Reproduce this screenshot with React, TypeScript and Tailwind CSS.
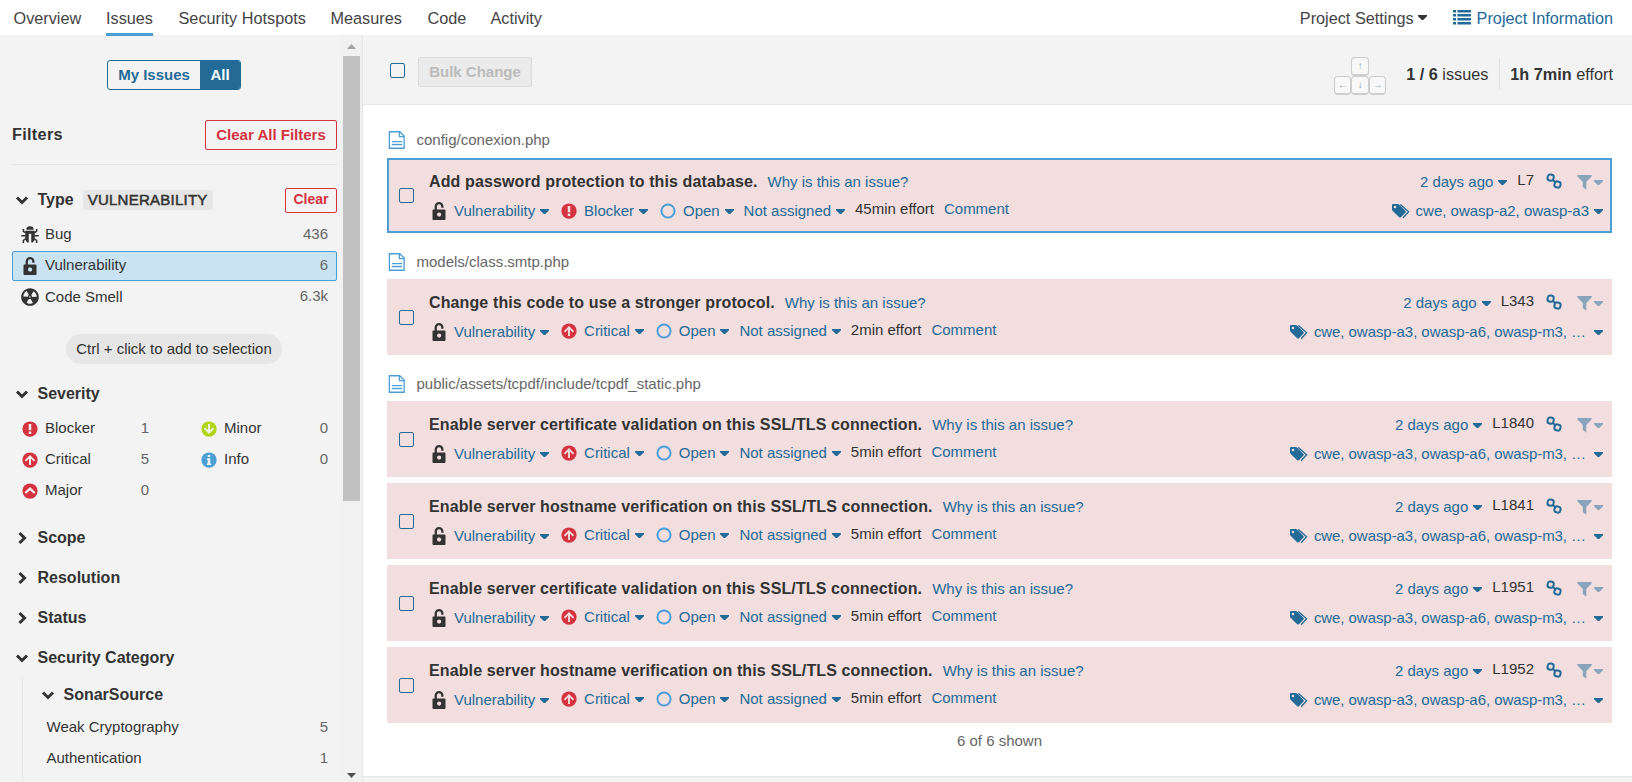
import React from "react";

function Svg({ children, className = "", size = 20 }: { children: React.ReactNode; className?: string; size?: number }) {
  return (
    <svg viewBox="0 0 16 16" width={size} height={size} fill="currentColor" className={`block shrink-0 ${className}`}>
      {children}
    </svg>
  );
}

const BugIcon = () => (
  <Svg className="text-[#333]">
    <path d="M5.100 3.400a2.900 2.500 0 0 1 5.800 0v.4H5.100z" />
    <path fillRule="evenodd" d="M4.200 4.500h7.600v7.200l-1.600 2.300H9V6.900H7V14H5.800l-1.600-2.300z" />
    <path
      d="M4.600 6.300L2.700 5V3.200M11.400 6.300L13.300 5V3.200M4.400 8.600H1M11.600 8.600H15M4.600 11l-1.900 1.400v2M11.400 11l1.900 1.400v2"
      fill="none"
      stroke="currentColor"
      strokeWidth="1.200"
    />
  </Svg>
);

const LockIcon = () => (
  <Svg className="text-[#333]">
    <path
      fillRule="evenodd"
      d="M3.600 6.700h8.800c.4 0 .8.300.8.800v6.800c0 .4-.3.800-.8.800H3.600c-.4 0-.8-.3-.8-.8V7.500c0-.4.300-.8.800-.8zM8.100 9.100a1.700 1.700 0 1 0 0 3.400 1.700 1.700 0 0 0 0-3.400z"
    />
    <path d="M5.400 7.200V4.400a2.650 2.650 0 0 1 5.300 0v1" fill="none" stroke="currentColor" strokeWidth="1.800" />
  </Svg>
);

const SmellIcon = () => (
  <Svg className="text-[#333]">
    <path
      transform="translate(8 8) scale(1.18) translate(-8 -8)"
      d="M8 2C4.700 2 2 4.700 2 8s2.700 6 6 6 6-2.700 6-6-2.700-6-6-6zm-.5 5.500h.9v.9h-.9v-.9zm-3.800.2c-.1 0-.2-.1-.2-.2 0-.4.100-1.200.6-2S5.300 4.200 5.600 4c.2 0 .3 0 .3.100l1.300 2.300c0 .1 0 .2-.1.200-.1.200-.2.300-.3.500-.1.200-.2.400-.2.500 0 .1-.1.200-.2.200l-2.700-.1zM9.900 12c-.3.200-1.100.5-2 .5-.9 0-1.700-.3-2-.5-.1 0-.1-.2-.1-.3l1.300-2.300c0-.1.100-.1.200-.1.200.1.300.1.500.1s.4 0 .5-.1c.1 0 .2 0 .2.100l1.300 2.300c.2.200.2.300.1.300zm2.500-4.100L9.700 8c-.1 0-.2-.1-.2-.2 0-.2-.1-.4-.2-.5 0-.1-.2-.3-.3-.4-.1 0-.1-.1-.1-.2l1.300-2.300c.1-.1.200-.1.300-.1.300.2 1 .7 1.500 1.500s.6 1.600.6 2c0 0-.1.100-.2.100z"
    />
  </Svg>
);

type Severity = "Blocker" | "Critical" | "Major" | "Minor" | "Info";

function SeverityIcon({ kind, hole = "#f3f3f3" }: { kind: Severity; hole?: string }) {
  const color = kind === "Minor" ? "#b0d513" : kind === "Info" ? "#4b9fd5" : "#d4333f";
  return (
    <Svg>
      <circle cx="8" cy="8" r="6.100" fill={color} />
      {kind === "Blocker" && <path fill={hole} d="M7 4h2v5H7zM7 10h2v2H7z" />}
      {kind === "Critical" && (
        <path d="M8 12V5M4.400 8.700L8 5.100l3.600 3.600" stroke={hole} strokeWidth="1.500" fill="none" />
      )}
      {kind === "Major" && <path d="M4.300 9.600L8 6.100l3.700 3.500" stroke={hole} strokeWidth="1.800" fill="none" />}
      {kind === "Minor" && (
        <path d="M8 4v7M4.400 7.300L8 10.900l3.600-3.600" stroke={hole} strokeWidth="1.500" fill="none" />
      )}
      {kind === "Info" && <path fill={hole} d="M7 4h2v1.600H7zM6.300 6.500H9v4.300h.700V12H6.300v-1.200H7V7.700h-.700z" />}
    </Svg>
  );
}

const FileIcon = () => (
  <Svg className="text-[#4b9fd5]">
    <path d="M1.900 1.400h8.300l3.500 3.500v9.700H1.900z" fill="none" stroke="currentColor" strokeWidth="1.050" />
    <path d="M9.900 1.400v3.800h3.800" fill="none" stroke="currentColor" strokeWidth="1" />
    <path d="M3.900 9.200h8.200M3.900 11.700h8.200" stroke="currentColor" strokeWidth=".9" />
    <path d="M3.900 10.400h8.200" stroke="currentColor" strokeWidth=".7" opacity=".45" />
  </Svg>
);

const Caret = ({ className = "text-[#236a97]" }: { className?: string }) => (
  <svg viewBox="0 0 9 5" width="9" height="5" fill="currentColor" className={`block shrink-0 ${className}`}>
    <path d="M0 0h9v1.200L5.200 5H3.800L0 1.200z" />
  </svg>
);

const Chevron = ({ open }: { open?: boolean }) => (
  <svg viewBox="0 0 20 20" width="20" height="20" fill="none" stroke="#333" strokeWidth="3" className="block shrink-0">
    {open ? <path d="M5 7.500l5 5 5-5" /> : <path d="M7.500 5l5 5-5 5" />}
  </svg>
);

const LinkIcon = () => (
  <Svg className="text-[#236a97]">
    <g fill="none" stroke="currentColor" strokeWidth="1.600">
      <rect x="2.900" y="2.900" width="4.800" height="4.800" rx="1.900" transform="rotate(12 5.300 5.300)" />
      <rect x="8.400" y="8.400" width="4.800" height="4.800" rx="1.900" transform="rotate(12 10.800 10.800)" />
      <path d="M6.600 6.600l3 3" />
    </g>
  </Svg>
);

const FunnelIcon = () => (
  <svg viewBox="0 0 15 15" width="15" height="15" fill="currentColor" className="block shrink-0 text-[#8aa5bb]">
    <path d="M.3 0h14.400v1.300L9.300 7v7.800L5.800 12V7L.3 1.300z" />
  </svg>
);

const TagsIcon = () => (
  <svg viewBox="0 0 18 15" width="18" height="15" className="block shrink-0 text-[#236a97]">
    <path
      fill="currentColor"
      fillRule="evenodd"
      d="M0 1.200C0 .5.500 0 1.200 0h4.500c.5 0 1 .2 1.400.6l6.400 6.300c.5.500.5 1.100 0 1.600l-4.700 4.700c-.5.500-1.100.5-1.600 0L.8 6.900C.3 6.500 0 6 0 5.500zM3 1.700a1.300 1.300 0 1 0 0 2.600 1.300 1.300 0 0 0 0-2.600z"
    />
    <path d="M8.300.4l8.300 7.400-5.500 6" fill="none" stroke="currentColor" strokeWidth="1.300" />
  </svg>
);

const Checkbox = () => <span className="block size-[15px] shrink-0 rounded-[2px] border border-[#236a97]" />;

const Key = ({ children }: { children: string }) => (
  <span className="flex h-[19px] w-[17.330px] items-center justify-center rounded-[4px] border border-b-2 border-[#cdcdcd] bg-[#f8f8f8] text-[10px] leading-none text-[#8c9aa8]">
    {children}
  </span>
);

function NavBar() {
  return (
    <nav className="flex h-[35px] shrink-0 bg-white pr-[19px] pl-[13.500px] text-[16.250px] leading-[36px] text-[#444]">
      <span className="w-[92.500px]">Overview</span>
      <span className="z-10 mr-[25.500px] h-[36px] w-[47px] border-b-3 border-[#4b9fd5]">Issues</span>
      <span className="w-[152px]">Security Hotspots</span>
      <span className="w-[97px]">Measures</span>
      <span className="w-[63px]">Code</span>
      <span>Activity</span>
      <span className="ml-auto flex items-center">
        Project Settings
        <Caret className="ml-[4px] text-[#333]" />
      </span>
      <span className="ml-[26px] flex items-center text-[#236a97]">
        <svg viewBox="0 0 18 15" width="18" height="15" fill="currentColor" className="mr-[6px] block">
          <path d="M0 0h3v2.600H0zM4.400 0H18v2.600H4.400zM0 4h3v2.600H0zM4.400 4H18v2.600H4.400zM0 8h3v2.600H0zM4.400 8H18v2.600H4.400zM0 12h3v2.600H0zM4.400 12H18v2.600H4.400z" />
        </svg>
        Project Information
      </span>
    </nav>
  );
}

function FacetHeader({ title, open }: { title: string; open?: boolean }) {
  return (
    <div className="flex h-5 items-center">
      <Chevron open={open} />
      <span className="ml-[5.500px] text-[16px] font-bold">{title}</span>
    </div>
  );
}

function FacetRow({ icon, label, count, selected, low }: {
  icon?: React.ReactNode;
  label: string;
  count: string;
  selected?: boolean;
  low?: boolean;
}) {
  const frame = selected ? "border-[#4b9fd5] bg-[#cae3f2]" : "border-transparent";
  return (
    <div className={`flex h-[30px] items-center rounded-[2px] border pr-2 pl-[7px] text-[15px] ${frame}`}>
      {icon}
      <span className={`${icon ? "ml-[5px]" : ""} ${low ? "pt-px" : "pb-px"}`}>{label}</span>
      <span className="ml-auto pb-px text-[#666]">{count}</span>
    </div>
  );
}

function Sidebar() {
  return (
    <aside className="flex w-[363px] shrink-0 overflow-hidden border-r border-[#e6e6e6] bg-[#f3f3f3]">
      <div className="flex w-[341px] shrink-0 flex-col pr-1 pl-3 text-[#333]">
        <div className="mt-[25px] mr-px flex h-[30px] w-[134px] shrink-0 self-center overflow-hidden rounded-[3px] border border-[#236a97] text-[15px] leading-[28px] font-bold">
          <span className="w-[92px] text-center text-[#236a97]">My Issues</span>
          <span className="flex-1 bg-[#236a97] text-center text-white">All</span>
        </div>
        <div className="mt-[30px] flex h-[45px] shrink-0 items-start justify-between border-b border-[#e6e6e6]">
          <span className="text-[16.250px] leading-[28px] font-bold tracking-[0.3px]">Filters</span>
          <span className="h-[30px] w-[132px] rounded-[2px] border border-[#d4333f] text-center text-[15px] leading-[28px] font-bold text-[#d4333f]">
            Clear All Filters
          </span>
        </div>
        <div className="mt-[23px] flex h-[25px] shrink-0 items-start">
          <div className="pt-[2px]">
            <FacetHeader title="Type" open />
          </div>
          <span className="mt-[2px] ml-[9px] h-5 w-[130px] rounded-[3px] bg-[#e6e6e6] text-center text-[15px] leading-[19px] tracking-[0.25px] [-webkit-text-stroke:0.5px_#333]">
            VULNERABILITY
          </span>
          <span className="ml-auto h-[25px] w-[52px] rounded-[2px] border border-[#d4333f] text-center text-[14px] leading-[21px] font-bold text-[#d4333f]">
            Clear
          </span>
        </div>
        <div className="mt-[7px] flex shrink-0 flex-col gap-px">
          <FacetRow icon={<BugIcon />} label="Bug" count="436" />
          <FacetRow icon={<LockIcon />} label="Vulnerability" count="6" selected />
          <FacetRow icon={<SmellIcon />} label="Code Smell" count="6.3k" low />
        </div>
        <div className="mt-[22px] mr-px h-[30px] w-[216px] shrink-0 self-center rounded-full bg-[#e6e6e6] text-center text-[15px] leading-[30px]">
          Ctrl + click to add to selection
        </div>
        <div className="mt-5 shrink-0">
          <FacetHeader title="Severity" open />
        </div>
        <div className="mt-[10px] flex shrink-0 justify-between">
          <div className="flex w-[146px] flex-col gap-px">
            <FacetRow icon={<SeverityIcon kind="Blocker" />} label="Blocker" count="1" />
            <FacetRow icon={<SeverityIcon kind="Critical" />} label="Critical" count="5" />
            <FacetRow icon={<SeverityIcon kind="Major" />} label="Major" count="0" />
          </div>
          <div className="flex w-[146px] flex-col gap-px">
            <FacetRow icon={<SeverityIcon kind="Minor" />} label="Minor" count="0" />
            <FacetRow icon={<SeverityIcon kind="Info" />} label="Info" count="0" />
          </div>
        </div>
        <div className="mt-[22px] flex shrink-0 flex-col gap-5">
          <FacetHeader title="Scope" />
          <FacetHeader title="Resolution" />
          <FacetHeader title="Status" />
          <FacetHeader title="Security Category" open />
        </div>
        <div className="mt-[10px] ml-[10px] shrink-0 border-l border-[#e6e6e6] pt-[7px] pb-4">
          <div className="pl-[15px]">
            <FacetHeader title="SonarSource" open />
          </div>
          <div className="mt-2 flex flex-col gap-px pl-[15.500px]">
            <FacetRow label="Weak Cryptography" count="5" />
            <FacetRow label="Authentication" count="1" />
          </div>
        </div>
      </div>
      <div className="flex w-[21px] shrink-0 flex-col items-center bg-[#f1f1f1]">
        <svg viewBox="0 0 9 5" width="9" height="5" className="mt-[9px] block shrink-0 fill-[#a3a3a3]">
          <path d="M0 5L4.500 0 9 5z" />
        </svg>
        <div className="mt-[7px] h-[445px] w-[17px] shrink-0 bg-[#c1c1c1]" />
        <svg viewBox="0 0 9 5" width="9" height="5" className="mt-auto mb-[4px] block shrink-0 fill-[#505050]">
          <path d="M0 0h9L4.500 5z" />
        </svg>
      </div>
    </aside>
  );
}

type Issue = { title: string; severity: Severity; effort: string; line: string; tags: string; selected?: boolean };

const longTags = "cwe, owasp-a3, owasp-a6, owasp-m3, …";
const groups: { file: string; issues: Issue[] }[] = [
  {
    file: "config/conexion.php",
    issues: [
      {
        title: "Add password protection to this database.",
        severity: "Blocker",
        effort: "45min effort",
        line: "L7",
        tags: "cwe, owasp-a2, owasp-a3",
        selected: true,
      },
    ],
  },
  {
    file: "models/class.smtp.php",
    issues: [
      { title: "Change this code to use a stronger protocol.", severity: "Critical", effort: "2min effort", line: "L343", tags: longTags },
    ],
  },
  {
    file: "public/assets/tcpdf/include/tcpdf_static.php",
    issues: [
      { title: "Enable server certificate validation on this SSL/TLS connection.", severity: "Critical", effort: "5min effort", line: "L1840", tags: longTags },
      { title: "Enable server hostname verification on this SSL/TLS connection.", severity: "Critical", effort: "5min effort", line: "L1841", tags: longTags },
      { title: "Enable server certificate validation on this SSL/TLS connection.", severity: "Critical", effort: "5min effort", line: "L1951", tags: longTags },
      { title: "Enable server hostname verification on this SSL/TLS connection.", severity: "Critical", effort: "5min effort", line: "L1952", tags: longTags },
    ],
  },
];

function Picker({ icon, label, raised }: { icon?: React.ReactNode; label: string; raised?: boolean }) {
  return (
    <span className={`mr-[9.900px] flex items-center ${raised ? "-mt-[2px]" : ""}`}>
      {icon}
      <span className={icon ? "ml-[5px]" : ""}>{label}</span>
      <Caret className="ml-[5px] text-[#236a97]" />
    </span>
  );
}

function IssueCard({ issue }: { issue: Issue }) {
  const frame = issue.selected ? "h-[75px] border-[#4b9fd5]" : "h-[76px] border-[#f2dede]";
  const raised = !issue.selected;
  return (
    <article className={`flex border-2 bg-[#f2dede] pr-[7px] pl-[10px] text-[15px] text-[#236a97] ${frame}`}>
      <div className={issue.selected ? "pt-[28px]" : "pt-[29px]"}>
        <Checkbox />
      </div>
      <div className="ml-[15px] flex flex-1 flex-col">
        <div className="mt-[12px] flex h-5 items-center">
          <h3 className="text-[16px] font-bold tracking-[0.12px] text-[#333]">{issue.title}</h3>
          <span className="ml-[10px]">Why is this an issue?</span>
          <span className="ml-auto">2 days ago</span>
          <Caret className="ml-[5px] text-[#236a97]" />
          <span className="-mt-[3px] ml-[10px] text-[#333]">{issue.line}</span>
          <span className="-mt-[2px] ml-[10px]">
            <LinkIcon />
          </span>
          <span className="ml-[12.500px]">
            <FunnelIcon />
          </span>
          <Caret className="ml-[2.500px] text-[#8aa5bb]" />
        </div>
        <div className="mt-[9px] flex h-5 items-center">
          <Picker icon={<LockIcon />} label="Vulnerability" />
          <Picker icon={<SeverityIcon kind={issue.severity} hole="#f2dede" />} label={issue.severity} raised={raised} />
          <Picker
            icon={
              <Svg>
                <circle cx="8" cy="8" r="5.250" fill="none" stroke="#4b9fd5" strokeWidth="1.600" />
              </Svg>
            }
            label="Open"
            raised={raised}
          />
          <Picker label="Not assigned" raised={raised} />
          <span className="-mt-[3px] text-[#333]">{issue.effort}</span>
          <span className="-mt-[3px] ml-[10px]">Comment</span>
          <span className="ml-auto">
            <TagsIcon />
          </span>
          <span className={issue.selected ? "ml-[6px]" : "ml-[6px] tracking-[-0.06px]"}>{issue.tags}</span>
          <Caret className={issue.selected ? "ml-[5px] text-[#236a97]" : "ml-[8px] text-[#236a97]"} />
        </div>
      </div>
    </article>
  );
}

function Toolbar() {
  return (
    <header className="flex h-[70px] shrink-0 items-center border-b border-[#e6e6e6] bg-[#f3f3f3] pr-[19px] pl-[27px] text-[16.250px] text-[#333]">
      <div className="pt-[2px]">
        <Checkbox />
      </div>
      <span className="mt-[5px] ml-[13px] h-[30px] w-[114px] rounded-[2px] border border-[#ddd] bg-[#ebebeb] text-center text-[15px] leading-[28px] font-bold text-[#bbb]">
        Bulk Change
      </span>
      <div className="ml-auto flex flex-col items-center pt-[13px]">
        <Key>↑</Key>
        <div className="flex">
          <Key>←</Key>
          <Key>↓</Key>
          <Key>→</Key>
        </div>
      </div>
      <span className="ml-5 pt-[9px]">
        <b>1 / 6</b> issues
      </span>
      <span className="mt-[9px] ml-[11px] h-[30px] border-l border-[#e1e1e1] pl-[10px] leading-[30px]">
        <b>1h 7min</b> effort
      </span>
    </header>
  );
}

export default function App() {
  return (
    <div className="flex h-[782px] w-[1632px] flex-col overflow-hidden bg-white font-['Liberation_Sans',Arial,sans-serif]">
      <NavBar />
      <div className="flex min-h-0 flex-1">
        <Sidebar />
        <main className="flex flex-1 flex-col">
          <Toolbar />
          <div className="flex flex-1 flex-col border-b border-[#e6e6e6] pt-[24px] pr-5 pl-6">
            {groups.map((group, index) => (
              <section key={group.file} className="mb-[17px]">
                <div className={`flex h-[29px] items-start ${index > 0 ? "pt-px" : ""}`}>
                  <span className="mt-px">
                    <FileIcon />
                  </span>
                  <span className="ml-[9.500px] text-[15px] leading-[22px] text-[#666]">{group.file}</span>
                </div>
                <div className="flex flex-col gap-[6px]">
                  {group.issues.map((issue) => (
                    <IssueCard key={issue.line} issue={issue} />
                  ))}
                </div>
              </section>
            ))}
            <p className="-mt-[9px] text-center text-[15px] leading-[20px] text-[#666]">6 of 6 shown</p>
          </div>
          <div className="h-[5px] shrink-0 bg-[#f3f3f3]" />
        </main>
      </div>
    </div>
  );
}
